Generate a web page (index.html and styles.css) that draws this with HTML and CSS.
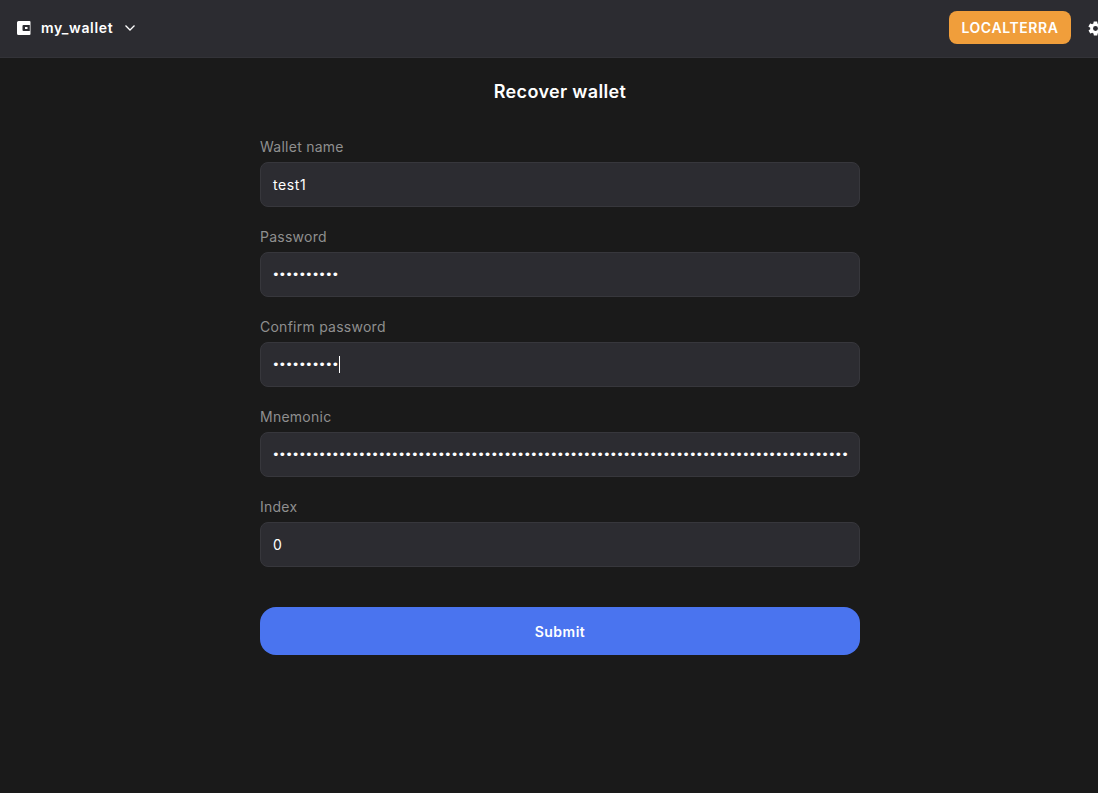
FILE: index.html
```html
<!DOCTYPE html>
<html lang="en">
<head>
<meta charset="utf-8">
<title>Recover wallet</title>
<link rel="stylesheet" href="styles.css">
</head>
<body>
<div class="page">
  <header class="topbar">
    <div class="wallet">
      <svg class="wallet-icon" width="14" height="14" viewBox="0 0 14 14"><path fill="#fff" fill-rule="evenodd" d="M1.500 0H12.500A1 1 0 0 1 13.500 1V13A1 1 0 0 1 12.500 14H1.500A1.500 1.500 0 0 1 0 12.500V1.500A1.500 1.500 0 0 1 1.500 0ZM6.500 4A1 1 0 0 0 5.500 5V9A1 1 0 0 0 6.500 10H12.800V4Z"/><rect x="8" y="6" width="2.500" height="2" fill="#fff"/></svg>
      <span class="wallet-name">my_wallet</span>
      <svg class="chevron" width="12" height="8" viewBox="0 0 12 8"><path d="M1.500 1.500 6 6l4.500-4.500" fill="none" stroke="#fff" stroke-width="1.300"/></svg>
    </div>
    <div class="actions">
      <button class="network" type="button">LOCALTERRA</button>
      <svg class="gear" width="17" height="17" viewBox="0 0 24 24"><path fill="#fff" d="M19.400 13c.1-.3.100-.7.100-1s0-.7-.1-1l2.100-1.600c.2-.2.300-.4.100-.7l-2-3.400c-.1-.2-.4-.3-.6-.2l-2.500 1c-.5-.4-1.100-.7-1.700-1l-.4-2.600c0-.3-.2-.5-.5-.5h-4c-.3 0-.5.200-.5.500l-.4 2.600c-.6.300-1.200.6-1.700 1l-2.500-1c-.2-.1-.5 0-.6.200l-2 3.400c-.2.300-.1.500.1.700L4.600 11c-.1.300-.1.700-.1 1s0 .7.100 1l-2.100 1.600c-.2.200-.3.400-.1.700l2 3.400c.1.200.4.300.6.200l2.500-1c.5.400 1.100.7 1.700 1l.4 2.600c0 .3.200.5.500.5h4c.3 0 .5-.2.500-.5l.4-2.600c.6-.3 1.200-.6 1.700-1l2.500 1c.2.100.5 0 .6-.2l2-3.400c.2-.3.100-.5-.1-.7ZM12 15.500a3.500 3.500 0 1 1 0-7 3.500 3.500 0 0 1 0 7Z"/></svg>
    </div>
  </header>
  <main class="content">
    <h1 class="title">Recover wallet</h1>
    <form class="form">
      <div class="field">
        <label class="label">Wallet name</label>
        <div class="box"><span class="value">test1</span></div>
      </div>
      <div class="field">
        <label class="label">Password</label>
        <div class="box"><span class="dots">••••••••••</span></div>
      </div>
      <div class="field">
        <label class="label">Confirm password</label>
        <div class="box"><span class="dots">••••••••••</span><span class="caret"></span></div>
      </div>
      <div class="field">
        <label class="label">Mnemonic</label>
        <div class="box"><span class="dots">•••••••••••••••••••••••••••••••••••••••••••••••••••••••••••••••••••••••••••••••••••••••</span></div>
      </div>
      <div class="field">
        <label class="label">Index</label>
        <div class="box"><span class="value">0</span></div>
      </div>
      <button class="submit" type="button">Submit</button>
    </form>
  </main>
</div>
</body>
</html>
```
FILE: styles.css
```css
html, body {
  margin: 0;
  padding: 0;
  height: 100%;
  overflow: hidden;
  background: #1a1a1a;
}
body {
  font-family: Inter, "Liberation Sans", sans-serif;
  color: #fff;
}
.page {
  width: 1120px;
}
.topbar {
  height: 55px;
  padding: 0 16px 2px 17px;
  border-bottom: 1px solid #333338;
  background: #2c2c31;
  display: flex;
  align-items: center;
  justify-content: space-between;
}
.wallet {
  display: flex;
  align-items: center;
}
.wallet-icon {
  display: block;
  margin-top: 1px;
}
.wallet-name {
  margin-left: 10px;
  font-size: 14px;
  font-weight: 600;
  line-height: 20px;
  letter-spacing: 0.65px;
}
.chevron {
  display: block;
  margin-left: 11px;
  margin-top: 1px;
}
.actions {
  display: flex;
  align-items: center;
}
.network {
  width: 122px;
  height: 33px;
  border: 0;
  border-radius: 8px;
  background: #f09e3b;
  color: #fff;
  font-family: inherit;
  font-size: 14px;
  font-weight: 600;
  letter-spacing: 0.6px;
  padding: 0;
}
.gear {
  display: block;
  margin-left: 16px;
  margin-top: 1px;
}
.content {
  width: 600px;
  margin: 0 auto;
}
.title {
  margin: 23px 0 0;
  font-size: 18px;
  line-height: 22px;
  font-weight: 600;
  letter-spacing: 0.35px;
  text-align: center;
}
.form {
  margin-top: 35px;
}
.field {
  margin-bottom: 21px;
}
.label {
  display: block;
  font-size: 14px;
  line-height: 18px;
  letter-spacing: 0.25px;
  color: #8f8f8f;
  margin-bottom: 6px;
}
.box {
  height: 43px;
  border: 1px solid #37373c;
  border-radius: 8px;
  background: #2c2c31;
  display: flex;
  align-items: center;
  padding: 0 12px;
  overflow: hidden;
}
.value {
  font-size: 14px;
  letter-spacing: 0.6px;
  color: #fff;
}
.dots {
  margin-left: -1px;
  font-family: "DejaVu Sans", sans-serif;
  font-size: 13px;
  letter-spacing: -1.05px;
  white-space: nowrap;
  color: #fff;
}
.caret {
  width: 1px;
  height: 17px;
  margin-left: 1px;
  background: #fff;
}
.submit {
  display: block;
  width: 100%;
  height: 48px;
  margin-top: 40px;
  border: 0;
  border-radius: 16px;
  background: #4a74ef;
  color: #fff;
  font-family: inherit;
  font-size: 14px;
  font-weight: 600;
  letter-spacing: 0.5px;
}
```
